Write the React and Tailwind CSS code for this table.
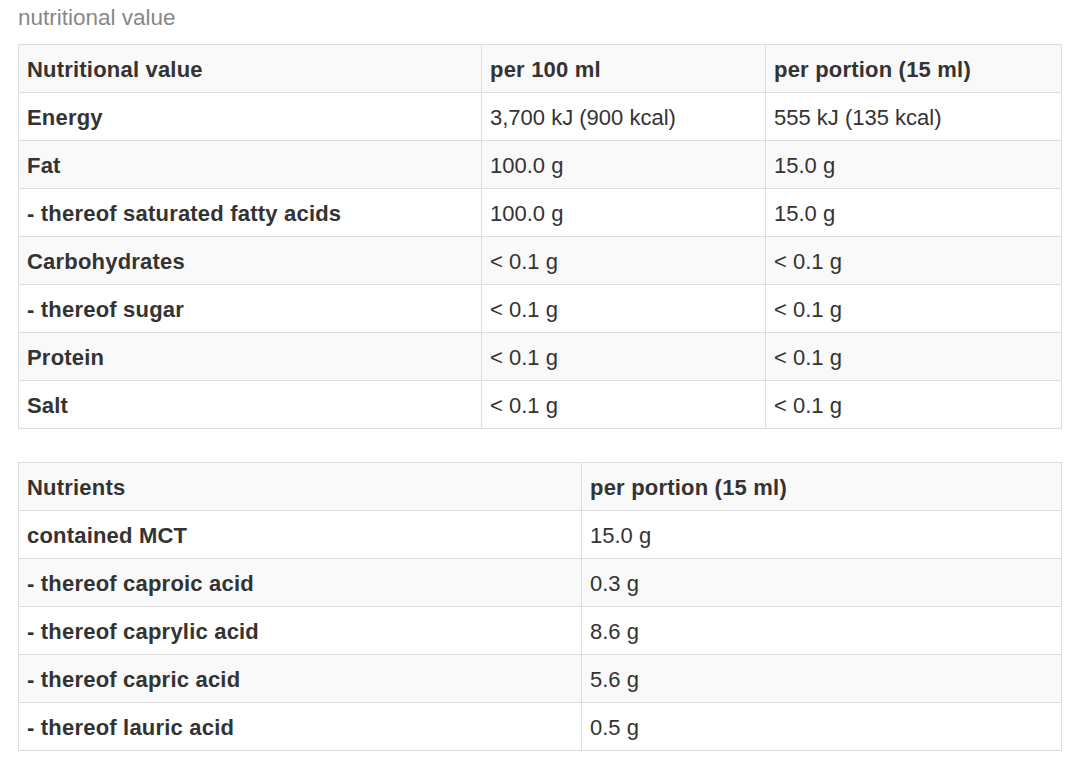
import React from "react";

const t1 = [
  ["Nutritional value", "per 100 ml", "per portion (15 ml)", true],
  ["Energy", "3,700 kJ (900 kcal)", "555 kJ (135 kcal)"],
  ["Fat", "100.0 g", "15.0 g"],
  ["- thereof saturated fatty acids", "100.0 g", "15.0 g"],
  ["Carbohydrates", "< 0.1 g", "< 0.1 g"],
  ["- thereof sugar", "< 0.1 g", "< 0.1 g"],
  ["Protein", "< 0.1 g", "< 0.1 g"],
  ["Salt", "< 0.1 g", "< 0.1 g"],
];

const t2 = [
  ["Nutrients", "per portion (15 ml)", true],
  ["contained MCT", "15.0 g"],
  ["- thereof caproic acid", "0.3 g"],
  ["- thereof caprylic acid", "8.6 g"],
  ["- thereof capric acid", "5.6 g"],
  ["- thereof lauric acid", "0.5 g"],
];

const cell = "border border-[#dddddd] px-[8px] pt-[9px] pb-[7px] leading-[31px] align-top";
const bold = "font-bold tracking-[0.2px]";

export default function App() {
  return (
    <div
      className="min-h-screen bg-white pl-[18px] text-[22px] text-[#333333]"
      style={{ fontFamily: '"Liberation Sans", Arial, sans-serif' }}
    >
      <div className="pt-[5px] mb-[14px] leading-[25px] text-[22.5px] text-[#888888]">nutritional value</div>
      <table className="table-fixed border-collapse w-[1043px]">
        <colgroup>
          <col className="w-[463px]" />
          <col className="w-[284px]" />
          <col className="w-[296px]" />
        </colgroup>
        <tbody>
          {t1.map((r, i) => (
            <tr key={i} className={i % 2 === 0 ? "bg-[#f9f9f9]" : "bg-white"}>
              <td className={`${cell} ${bold}`}>{r[0]}</td>
              <td className={`${cell} ${r[3] ? bold : ""}`}>{r[1]}</td>
              <td className={`${cell} ${r[3] ? bold : ""}`}>{r[2]}</td>
            </tr>
          ))}
        </tbody>
      </table>
      <table className="table-fixed border-collapse w-[1043px] mt-[33px]">
        <colgroup>
          <col className="w-[563px]" />
          <col className="w-[480px]" />
        </colgroup>
        <tbody>
          {t2.map((r, i) => (
            <tr key={i} className={i % 2 === 0 ? "bg-[#f9f9f9]" : "bg-white"}>
              <td className={`${cell} ${bold}`}>{r[0]}</td>
              <td className={`${cell} ${r[2] ? bold : ""}`}>{r[1]}</td>
            </tr>
          ))}
        </tbody>
      </table>
    </div>
  );
}
